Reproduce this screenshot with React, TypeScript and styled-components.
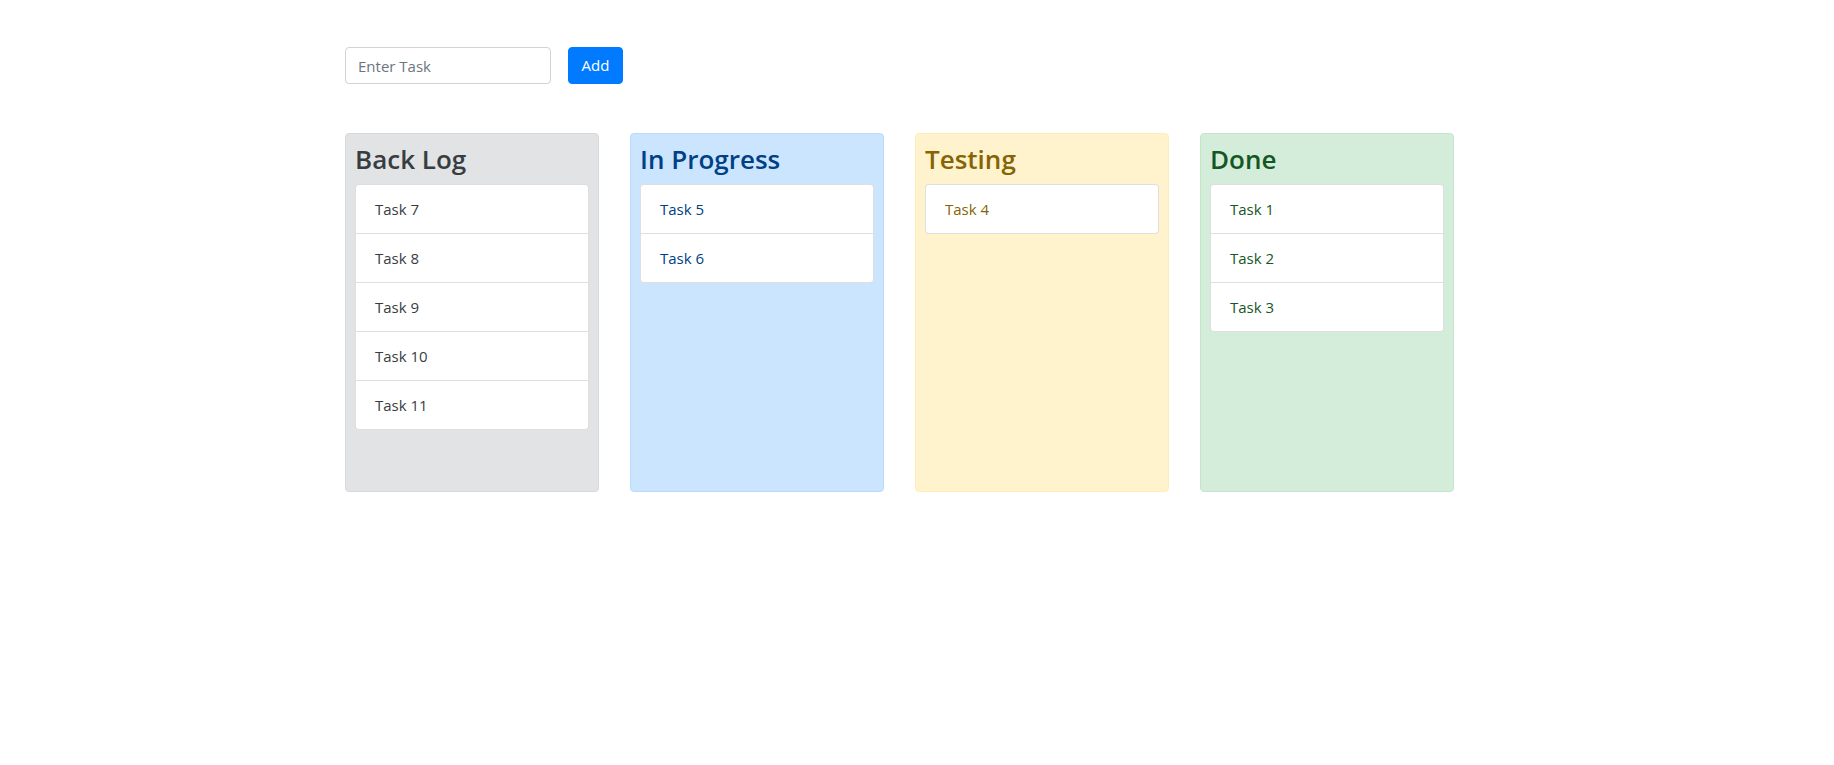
import React from "react";
import styled, { createGlobalStyle } from "styled-components";

const GlobalStyle = createGlobalStyle`
  * { box-sizing: border-box; }
  html, body { margin: 0; padding: 0; background: #fff; }
  body {
    font-family: "Open Sans", "Noto Sans", "Liberation Sans", sans-serif;
    font-size: 16px;
    line-height: 1.5;
    color: #212529;
  }
`;

type Tone = "secondary" | "primary" | "warning" | "success";

const tones: Record<Tone, { bg: string; border: string; color: string }> = {
  secondary: { bg: "#e2e3e5", border: "#d6d8db", color: "#383d41" },
  primary: { bg: "#cce5ff", border: "#b8daff", color: "#004085" },
  warning: { bg: "#fff3cd", border: "#ffeeba", color: "#856404" },
  success: { bg: "#d4edda", border: "#c3e6cb", color: "#155724" },
};

const Page = styled.div`
  padding: 47px 0 0 345px;
`;

const Form = styled.form`
  display: flex;
  align-items: center;
  gap: 17px;
  margin: 0 0 49px;
`;

const TaskInput = styled.input`
  width: 206px;
  height: 37px;
  padding: 6px 12px;
  font: inherit;
  font-size: 15px;
  color: #495057;
  border: 1px solid #ced4da;
  border-radius: 4px;
  outline: none;
  &::placeholder { color: #6c757d; }
`;

const AddButton = styled.button`
  width: 55px;
  height: 37px;
  padding: 0;
  font: inherit;
  font-size: 15px;
  color: #fff;
  background: #007bff;
  border: 1px solid #007bff;
  border-radius: 4px;
  cursor: pointer;
`;

const Board = styled.div`
  display: grid;
  grid-template-columns: repeat(4, 254px);
  column-gap: 31px;
`;

const Column = styled.section<{ $tone: Tone }>`
  height: 359px;
  padding: 9px;
  background: ${(p) => tones[p.$tone].bg};
  border: 1px solid ${(p) => tones[p.$tone].border};
  border-radius: 4px;
  color: ${(p) => tones[p.$tone].color};
`;

const Title = styled.h3`
  margin: 0 0 8px;
  font-size: 26px;
  font-weight: 600;
  line-height: 33px;
  color: inherit;
`;

const List = styled.ul`
  list-style: none;
  margin: 0;
  padding: 0;
  background: #fff;
  border: 1px solid rgba(0, 0, 0, 0.125);
  border-radius: 4px;
`;

const Item = styled.li`
  padding: 12px 19px;
  line-height: 24px;
  font-size: 15px;
  & + & { border-top: 1px solid rgba(0, 0, 0, 0.125); }
`;

const columns: { title: string; tone: Tone; tasks: string[] }[] = [
  { title: "Back Log", tone: "secondary", tasks: ["Task 7", "Task 8", "Task 9", "Task 10", "Task 11"] },
  { title: "In Progress", tone: "primary", tasks: ["Task 5", "Task 6"] },
  { title: "Testing", tone: "warning", tasks: ["Task 4"] },
  { title: "Done", tone: "success", tasks: ["Task 1", "Task 2", "Task 3"] },
];

export default function App() {
  return (
    <>
      <GlobalStyle />
      <Page>
        <Form onSubmit={(e) => e.preventDefault()}>
          <TaskInput placeholder="Enter Task" />
          <AddButton type="submit">Add</AddButton>
        </Form>
        <Board>
          {columns.map((c) => (
            <Column key={c.title} $tone={c.tone}>
              <Title>{c.title}</Title>
              <List>
                {c.tasks.map((t) => (
                  <Item key={t}>{t}</Item>
                ))}
              </List>
            </Column>
          ))}
        </Board>
      </Page>
    </>
  );
}
